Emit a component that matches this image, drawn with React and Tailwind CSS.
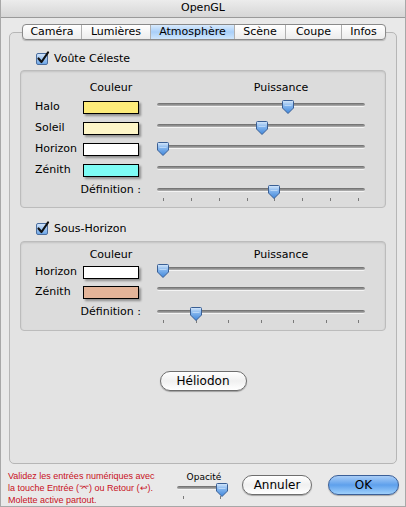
import React from "react";

const font = { fontFamily: '"DejaVu Sans", "Liberation Sans", sans-serif' };

const tabs = [
  { label: "Caméra", w: "w-[58px]" },
  { label: "Lumières", w: "w-[69px]" },
  { label: "Atmosphère", w: "w-[84px]", active: true },
  { label: "Scène", w: "w-[51px]" },
  { label: "Coupe", w: "w-[56px]" },
  { label: "Infos", w: "w-[44px]" },
];

const Thumb = ({ x }) => (
  <svg
    width="12"
    height="14"
    viewBox="0 0 12 14"
    className="absolute top-[-3px]"
    style={{ left: x - 6 }}
  >
    <defs>
      <linearGradient id="thumbGrad" x1="0" y1="0" x2="0" y2="1">
        <stop offset="0" stopColor="#d6e8fb" />
        <stop offset="0.45" stopColor="#7fb2ec" />
        <stop offset="1" stopColor="#3f86da" />
      </linearGradient>
    </defs>
    <path
      d="M1.5 0.5 H10.5 Q11.5 0.5 11.5 1.5 V8 L6 13.5 L0.5 8 V1.5 Q0.5 0.5 1.5 0.5 Z"
      fill="url(#thumbGrad)"
      stroke="#3a5f94"
      strokeWidth="1"
    />
    <path d="M2.5 5.5 H9.5" stroke="#b8d6f7" strokeWidth="1" />
  </svg>
);

const Slider = ({ width = 208, thumb, ticks = 0 }) => (
  <div className="relative h-[14px]" style={{ width }}>
    <div className="absolute left-0 right-0 top-0 h-[4px] rounded-full bg-gradient-to-b from-[#6a6a6a] to-[#b4b4b4] border-b border-[#f4f4f4]" />
    {ticks > 0 && (
      <div className="absolute left-[6px] right-[6px] top-[10px] flex justify-between">
        {Array.from({ length: ticks }).map((_, i) => (
          <span key={i} className="w-px h-[3px] bg-[#7a7a7a]" />
        ))}
      </div>
    )}
    {thumb !== undefined && <Thumb x={thumb} />}
  </div>
);

const Swatch = ({ color }) => (
  <div
    className="w-[56px] h-[13px] border border-black shadow-[2px_2px_2px_rgba(0,0,0,0.35)]"
    style={{ background: color }}
  />
);

const ColorRow = ({ label, color, thumb, h = "h-[21px]" }) => (
  <div className={`flex items-center ${h}`}>
    <span className="w-[48px] pl-[14px] box-content text-[11px] text-black">{label}</span>
    <Swatch color={color} />
    <div className="ml-[18px] pt-[4px]">
      <Slider thumb={thumb} />
    </div>
  </div>
);

const Checkbox = ({ label }) => (
  <div className="flex items-center h-[14px] gap-[6px] pl-[26px]">
    <div className="relative w-[12px] h-[12px] rounded-[2px] border border-[#4a6d9e] bg-gradient-to-b from-[#cfe3fa] to-[#6ea6e6]">
      <svg width="14" height="14" viewBox="0 0 14 14" className="absolute left-[-1px] top-[-3px]">
        <path d="M2.5 7.5 L5.5 11 L12 1.5" fill="none" stroke="#111" strokeWidth="2.2" strokeLinecap="round" strokeLinejoin="round" />
      </svg>
    </div>
    <span className="text-[11px] text-black">{label}</span>
  </div>
);

const Header = () => (
  <div className="flex h-[14px] items-center text-[11px] text-black">
    <span className="w-[180px] text-center">Couleur</span>
    <span className="w-[130px] pl-[30px] text-center">Puissance</span>
  </div>
);

const Definition = ({ thumb, ticks, pt = "pt-[0px]" }) => (
  <div className={`flex items-start h-[20px] ${pt}`}>
    <span className="w-[120px] pt-[1px] text-right text-[11px] text-black">Définition :</span>
    <div className="ml-[16px] pt-[7px]">
      <Slider thumb={thumb} ticks={ticks} />
    </div>
  </div>
);

const AquaButton = ({ children, blue, w }) => (
  <button
    className={`${w} h-[20px] rounded-full border text-[12px] leading-none flex items-center justify-center ${
      blue
        ? "border-[#3b5f97] bg-gradient-to-b from-[#a9cdf6] via-[#5ea0ec] to-[#9fd0fb] text-black"
        : "border-[#6e6e6e] bg-gradient-to-b from-[#ffffff] via-[#f0f0f0] to-[#ffffff] text-black"
    } shadow-[0_1px_1px_rgba(0,0,0,0.3)]`}
  >
    {children}
  </button>
);

export default function App() {
  return (
    <div className="w-[406px] h-[507px] bg-[#e9e9e9] flex flex-col border-x border-b border-[#a8a8a8]" style={font}>
      {/* Title bar */}
      <div className="h-[18px] shrink-0 flex items-center justify-center bg-gradient-to-b from-[#ececec] to-[#d6d6d6] border-b border-[#9a9a9a] text-[11px] text-black">
        OpenGL
      </div>

      {/* Tabs */}
      <div className="relative z-10 mt-[6px] ml-[21px] flex h-[17px] w-fit rounded-[4px] border border-[#8a8a8a] bg-gradient-to-b from-[#ffffff] to-[#ececec] shadow-[0_1px_1px_rgba(0,0,0,0.2)] overflow-hidden">
        {tabs.map((t, i) => (
          <div
            key={t.label}
            className={`${t.w} flex items-center justify-center text-[11px] text-black ${
              i > 0 ? "border-l border-[#b0b0b0]" : ""
            } ${t.active ? "bg-gradient-to-b from-[#d9ebfd] via-[#a9cff8] to-[#cfe6fc]" : ""}`}
          >
            {t.label}
          </div>
        ))}
      </div>

      {/* Panel */}
      <div className="-mt-[8px] mx-[8px] h-[432px] shrink-0 rounded-[5px] border border-[#b6b6b6] bg-[#e3e3e3] flex flex-col">
        <div className="h-[19px] shrink-0" />
        <Checkbox label="Voûte Céleste" />

        <div className="mt-[4px] ml-[10px] w-[366px] h-[138px] shrink-0 rounded-[4px] border border-[#bcbcbc] bg-[#dcdcdc] shadow-[inset_0_1px_2px_rgba(0,0,0,0.12)] flex flex-col">
          <div className="h-[10px] shrink-0" />
          <Header />
          <div className="h-[2px] shrink-0" />
          <ColorRow label="Halo" color="#fdec7a" thumb={131} />
          <ColorRow label="Soleil" color="#fef6c8" thumb={105} />
          <ColorRow label="Horizon" color="#ffffff" thumb={6} />
          <ColorRow label="Zénith" color="#7dfcf5" />
          <Definition thumb={117} ticks={8} />
        </div>

        <div className="h-[14px] shrink-0" />
        <Checkbox label="Sous-Horizon" />

        <div className="mt-[5px] ml-[10px] w-[366px] h-[90px] shrink-0 rounded-[4px] border border-[#bcbcbc] bg-[#dcdcdc] shadow-[inset_0_1px_2px_rgba(0,0,0,0.12)] flex flex-col">
          <div className="h-[6px] shrink-0" />
          <Header />
          <ColorRow label="Horizon" color="#ffffff" thumb={6} h="h-[20px]" />
          <ColorRow label="Zénith" color="#e3b499" h="h-[20px]" />
          <Definition thumb={39} ticks={7} pt="pt-[1px]" />
        </div>

        <div className="flex justify-center mt-[40px]">
          <AquaButton w="w-[87px]">Héliodon</AquaButton>
        </div>
      </div>

      {/* Footer */}
      <div className="flex items-start mt-[5px]">
        <div className="pl-[7px] pt-[1px] text-[9px] leading-[12px] text-[#c8101c] w-[175px]" style={{ fontFamily: '"Liberation Sans", sans-serif' }}>
          <div>Validez les entrées numériques avec</div>
          <div>la touche Entrée (⌤) ou Retour (↩).</div>
          <div>Molette active partout.</div>
        </div>
        <div className="flex flex-col items-center w-[52px] pt-[3px]">
          <span className="text-[9px] leading-[10px] text-black pl-[4px]">Opacité</span>
          <div className="mt-[4px]">
            <Slider width={50} thumb={45} ticks={2} />
          </div>
        </div>
        <div className="ml-[14px] mt-[6px]">
          <AquaButton w="w-[70px]">Annuler</AquaButton>
        </div>
        <div className="ml-[16px] mt-[6px]">
          <AquaButton w="w-[71px]" blue>OK</AquaButton>
        </div>
      </div>
    </div>
  );
}
